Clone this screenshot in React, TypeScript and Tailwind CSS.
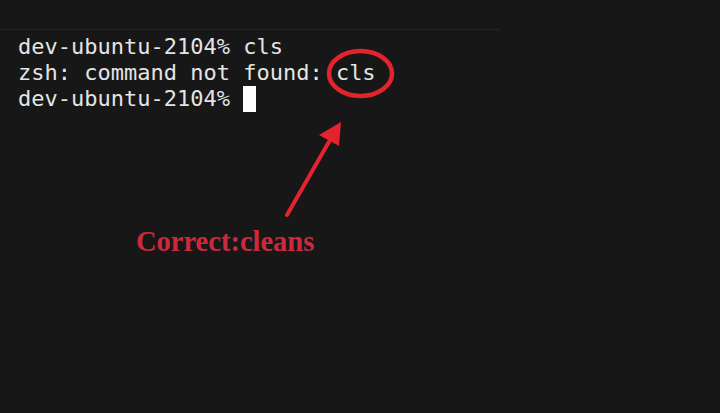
export default function App() {
  return (
    <div className="relative h-[413px] w-full overflow-hidden bg-[#171717]">
      {/* faint window edge */}
      <div className="h-[30px] w-[500px] border-b border-[#252525]" />

      {/* terminal output */}
      <div
        className="pl-[18px] pt-[4px] text-[22px] leading-[26px] text-[#e4e4e4]"
        style={{ fontFamily: '"DejaVu Sans Mono", monospace' }}
      >
        <div>dev-ubuntu-2104% cls</div>
        <div>zsh: command not found: cls</div>
        <div className="flex items-center">
          <span>dev-ubuntu-2104%&nbsp;</span>
          <span className="inline-block h-[26px] w-[13px] bg-white" />
        </div>
      </div>

      {/* annotation label */}
      <div
        className="mt-[114px] pl-[136px] text-[28.5px] font-bold leading-[32px] text-[#cc2a3c]"
        style={{ fontFamily: '"Liberation Serif", serif' }}
      >
        Correct:cleans
      </div>

      {/* circle + arrow */}
      <svg
        className="pointer-events-none absolute left-0 top-0"
        width="720"
        height="413"
        viewBox="0 0 720 413"
      >
        <ellipse cx="360.5" cy="73.5" rx="31.5" ry="22.5" fill="none" stroke="#e5232f" strokeWidth="4.5" />
        <line x1="287" y1="215" x2="330" y2="140" stroke="#e5232f" strokeWidth="4" strokeLinecap="round" />
        <polygon points="341,122 319,135 339,146" fill="#e5232f" />
      </svg>
    </div>
  );
}
